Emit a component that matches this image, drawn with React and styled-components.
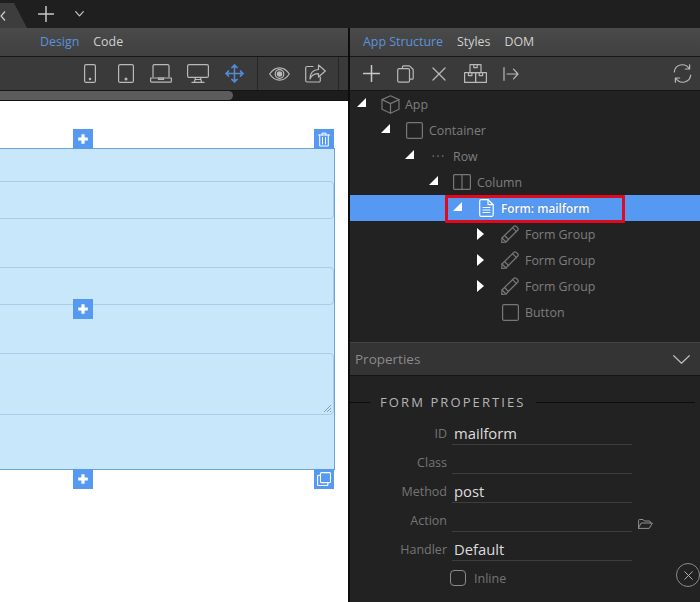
import React from "react";
import styled, { createGlobalStyle } from "styled-components";

const Global = createGlobalStyle`
  html, body { margin: 0; padding: 0; background: #000; }
  * { box-sizing: border-box; }
  body { font-family: "Open Sans", "Noto Sans", "Liberation Sans", sans-serif; }
`;

const Page = styled.div`
  width: 700px; height: 602px; display: flex; flex-direction: column; overflow: hidden; background: #222;
`;
const TopBar = styled.div`
  height: 28px; flex: none; display: flex; background: #1f1f20; color: #cfcfcf;
`;
const Tab = styled.div`
  width: 27px; height: 25px; margin-top: 3px; background: #3d3d3d; display: flex; align-items: center;
  clip-path: polygon(0 0, 14px 0, 27px 25px, 0 25px);
`;
const TopButton = styled.div`
  display: flex; align-items: center; justify-content: center; height: 28px; width: ${p => p.$w}px; margin-left: ${p => p.$ml || 0}px;
`;
const Main = styled.div`
  flex: 1; display: flex; min-height: 0;
`;
const LeftPane = styled.div`
  width: 349px; flex: none; display: flex; flex-direction: column; border-right: 1px solid #0d0d0d; background: #fff;
`;
const RightPane = styled.div`
  flex: 1; min-width: 0; display: flex; flex-direction: column; background: #222; position: relative; border-left: 1px solid #0d0d0d;
`;
const TabBar = styled.div`
  height: 29px; flex: none; display: flex; align-items: center; gap: ${p => p.$gap}px; padding-left: ${p => p.$pl}px;
  padding-bottom: 2px;
  background: linear-gradient(#4a4a4a, #404040); border-bottom: 1px solid #161616; font-size: 12.4px;
`;
const TabLink = styled.span`
  color: ${p => (p.$active ? "#5b93dc" : "#d0d0d0")};
`;
const Toolbar = styled.div`
  height: 34px; flex: none; display: flex; align-items: center; background: #3a3a3a; border-bottom: 1px solid #161616;
  padding-left: ${p => p.$pl || 0}px;
`;
const ToolCell = styled.div`
  width: ${p => p.$w || 36}px; height: 33px; flex: none; display: flex; align-items: center; justify-content: center;
  margin-left: ${p => p.$ml || 0}px;
`;
const ToolSep = styled.div`
  width: 1px; height: 33px; flex: none; background: #262626; margin-left: ${p => p.$ml}px;
`;
const ScrollTrack = styled.div`
  height: 10px; flex: none; background: #1c1c1c; border-bottom: 1px solid #111;
`;
const ScrollThumb = styled.div`
  width: 233px; height: 9px; background: #5c5c5c; border-radius: 0 5px 5px 0;
`;
const Canvas = styled.div`
  flex: 1; background: #fff; padding-top: 47px; overflow: hidden; position: relative;
`;
const SelectBox = styled.div`
  width: 337px; height: 322px; margin-left: -2px; position: relative; background: #c9e7fb;
  border: 1px solid #6ba4d8; padding-top: 32px; display: flex; flex-direction: column;
`;
const FieldShape = styled.div`
  height: ${p => p.$h}px; margin-bottom: ${p => p.$mb || 0}px; margin-right: 0; margin-left: -10px; flex: none;
  border: 1px solid #a8cde8; border-radius: 4px; position: relative;
`;
const Grip = styled.svg`
  position: absolute; right: 1px; bottom: 1px;
`;
const Handle = styled.div`
  position: absolute; width: 20px; height: 20px; background: #5599f3; display: flex; align-items: center; justify-content: center;
  left: ${p => p.$x}px; top: ${p => p.$y}px;
`;
const Tree = styled.div`
  flex: none; height: 251px; padding-top: 0; position: relative;
`;
const TreeRow = styled.div`
  height: 26px; display: flex; align-items: center; position: relative; padding-left: ${p => p.$level * 24 + 7}px;
  background: ${p => (p.$selected ? "#5599f3" : "transparent")};
  color: ${p => (p.$selected ? "#fff" : "#7e7e7e")}; font-size: 12.4px;
  ${p => p.$selected && "text-shadow: 0 0 1px rgba(0,0,0,.35); font-weight: 600; font-size: 11.8px;"}
`;
const Toggle = styled.span`
  width: 21px; height: 26px; flex: none; display: flex; align-items: center;
  padding-bottom: ${p => (p.$corner ? 4 : 0)}px;
`;
const NodeIcon = styled.span`
  width: 24px; margin-right: 3px; flex: none; display: flex; align-items: center; justify-content: center; height: 26px;
`;
const RedOutline = styled.div`
  position: absolute; left: 95px; top: 0; width: 180px; height: 28px; border: 3px solid #df0a1e; border-radius: 1px; pointer-events: none;
`;
const PropHeader = styled.div`
  height: 34px; flex: none; display: flex; align-items: center; justify-content: space-between; padding: 0 10px 0 5px;
  background: #343434; border-top: 1px solid #444; border-bottom: 1px solid #151515; color: #8a8a8a; font-size: 13.5px;
`;
const SectionTitle = styled.div`
  display: flex; align-items: center; margin-top: 16px; color: #b5b5b5; font-size: 13px; letter-spacing: 2.1px; height: 20px; padding-right: 5px;
  &::before { content: ""; width: 20px; height: 1px; background: #0c0c0c; margin-right: 10px; }
  &::after { content: ""; flex: 1; height: 1px; background: #0c0c0c; margin-left: 10px; }
`;
const Fields = styled.div`
  display: flex; flex-direction: column; margin-top: 4px;
`;
const FieldRow = styled.div`
  height: 29px; display: flex; align-items: flex-end; position: relative;
`;
const FieldLabel = styled.span`
  width: 97px; text-align: right; color: #757575; font-size: 12.5px; line-height: 22px;
`;
const FieldValue = styled.div`
  width: 180px; margin-left: 5px; height: 29px; border-bottom: 1px solid #3d3d3d; color: #dcdcdc; font-size: 14.8px; line-height: 28px; padding-left: 2px; padding-top: 3px;
`;
const FolderWrap = styled.span`
  margin-left: 6px; height: 29px; display: flex; align-items: flex-end; padding-bottom: 3px;
`;
const InlineRow = styled.label`
  display: flex; align-items: center; margin-left: 100px; height: 26px; color: #757575; font-size: 12.5px; gap: 8px; margin-top: 4px;
`;
const CheckBox = styled.span`
  width: 16px; height: 16px; border: 1px solid #8a8a8a; border-radius: 4px; display: block;
`;
const CloseCircle = styled.div`
  position: absolute; left: 326px; top: 535px; width: 24px; height: 24px; border-radius: 50%; border: 1px solid #8a8a8a;
  display: flex; align-items: center; justify-content: center;
`;

const S = ({ w, h, vb, c = "#b9b9b9", sw = 1.2, children }) => (
  <svg width={w} height={h} viewBox={vb || `0 0 ${w} ${h}`} fill="none" stroke={c} strokeWidth={sw} strokeLinejoin="round" strokeLinecap="round">
    {children}
  </svg>
);

const Phone = () => <S w={12} h={19}><rect x=".6" y=".6" width="10.8" height="17.8" rx="1.5" /><circle cx="6" cy="15" r=".7" fill="#b9b9b9" /></S>;
const Tablet = () => <S w={16} h={19}><rect x=".6" y=".6" width="14.8" height="17.8" rx="1.5" /><circle cx="8" cy="15" r=".9" fill="#b9b9b9" /></S>;
const Laptop = () => <S w={22} h={19}><path d="M3 13V2a1.4 1.4 0 0 1 1.4-1.4h13.2A1.4 1.4 0 0 1 19 2v11" /><path d="M.6 14h20.8v3.2a1 1 0 0 1-1 1H1.6a1 1 0 0 1-1-1z" /><path d="M8.5 14h5v1.5h-5z" /></S>;
const Monitor = () => <S w={22} h={19}><rect x=".6" y=".6" width="20.8" height="12.8" rx="1.5" /><path d="M8.5 13.5 7.5 18M13.5 13.5l1 4.5M5 18.4h12M8 15.5h6" /></S>;
const Move = () => (
  <S w={19} h={19} c="#4f8bd6" sw={1.5}>
    <path d="M9.5 1v17M1 9.5h17" />
    <path d="M6.8 3.6 9.5 1l2.7 2.6M6.8 15.4 9.5 18l2.7-2.6M3.6 6.8 1 9.5l2.6 2.7M15.4 6.8 18 9.5l-2.6 2.7" fill="#4f8bd6" />
  </S>
);
const Eye = () => <S w={21} h={14}><path d="M.7 7C3.5 2.8 6.8.8 10.5.8S17.5 2.8 20.3 7c-2.8 4.2-6.1 6.2-9.8 6.2S3.5 11.2.7 7z" /><circle cx="10.5" cy="7" r="4.3" /><circle cx="10.5" cy="7" r="2.2" fill="#b9b9b9" /></S>;
const Share = () => <S w={21} h={19}><path d="M8 2.5H2.2A1.5 1.5 0 0 0 .7 4v12.5A1.5 1.5 0 0 0 2.2 18h11.6a1.5 1.5 0 0 0 1.5-1.5V13" /><path d="M13.5 1 20.3 7l-6.8 6V9.7C9.5 9.7 6.5 11 5 15c0-5.5 3-9.2 8.5-9.5z" /></S>;
const Plus = ({ s = 17, c = "#c8c8c8" }) => <S w={s} h={s} c={c} sw={1.5}><path d={`M${s / 2} .5V${s - .5}M.5 ${s / 2}H${s - .5}`} /></S>;
const Copy = () => <S w={17} h={18}><path d="M5.5 3.5V1.8A1 1 0 0 1 6.5.8h6l3.7 3.7v8.7a1 1 0 0 1-1 1H12.6" /><rect x=".7" y="3.6" width="11.8" height="13.6" rx="1.5" /></S>;
const Cross = () => <S w={14} h={14} sw={1.3}><path d="M1 1l12 12M13 1 1 13" /></S>;
const Boxes = () => <S w={23} h={19}><rect x="6" y=".6" width="11" height="8" /><path d="M9.8.6v3h3.4v-3" /><rect x=".6" y="8.6" width="11" height="9.8" /><rect x="11.6" y="8.6" width="10.8" height="9.8" /><path d="M4.5 8.6v3h3.4v-3M15.2 8.6v3h3.4v-3" /></S>;
const ArrowBar = () => <S w={16} h={14}><path d="M1 .7v12.6M4 7h11M10.5 2.2 15 7l-4.5 4.8" /></S>;
const Refresh = () => <S w={19} h={19}><path d="M1.3 8A8 8 0 0 1 16 4.5M17.7 11A8 8 0 0 1 3 14.5" /><path d="M16.6.8V5h-4.2M2.4 18.2V14h4.2" /></S>;

const Corner = () => <svg width="9" height="9" viewBox="0 0 9 9"><path d="M9 0v9H0z" fill="#fff" /></svg>;
const RightArrow = () => <svg width="7" height="12" viewBox="0 0 7 12"><path d="M0 0l7 6-7 6z" fill="#fff" /></svg>;

const G = "#777";
const Cube = () => <S w={19} h={19} c={G}><path d="M9.5.8 18 4.6v9.6l-8.5 4L1 14.2V4.6z" /><path d="M1 4.6l8.5 4 8.5-4M9.5 8.6v9.6" /></S>;
const Square = () => <S w={17} h={17} c={G}><rect x=".6" y=".6" width="15.8" height="15.8" rx="1.5" /></S>;
const Dots = () => <S w={12} h={4} c="#9a9a9a"><path d="M1 2h.6M5.7 2h.6M10.4 2h.6" /></S>;
const Columns = () => <S w={18} h={16} c={G}><rect x=".6" y=".6" width="16.8" height="14.8" rx="1" /><path d="M9 .6v14.8" /></S>;
const Doc = () => <S w={15} h={18} c="#fff"><path d="M2 .7h7l5.2 5v10a1.6 1.6 0 0 1-1.6 1.6H2A1.4 1.4 0 0 1 .7 15.8V2A1.4 1.4 0 0 1 2 .7z" /><path d="M9 .7v5h5.2M4 8.5h7M4 11h7M4 13.5h7" /></S>;
const Pencil = () => <S w={18} h={18} c={G}><path d="M1 13 13 1.2a1.5 1.5 0 0 1 2 0l1.8 1.8a1.5 1.5 0 0 1 0 2L5 17l-4.3.6z" /><path d="M1 13l4 4M3.5 10.5l4 4M11.5 2.6l4 4" /></S>;
const Chevron = () => <S w={17} h={9} c="#bdbdbd"><path d="M.7.7 8.5 8.3 16.3.7" /></S>;
const Folder = () => <S w={15} h={10} c="#8f8f8f" sw={1}><path d="M.6 9.4V1.5a1 1 0 0 1 1-1h3.5l1.2 1.5h5a1 1 0 0 1 1 1v1" /><path d="M.6 9.4h10.6l3.2-5.4H3.6z" /></S>;

const HandlePlus = () => <svg width="12" height="12" viewBox="0 0 12 12"><path d="M6 1.2v9.6M1.2 6h9.6" stroke="#fff" strokeWidth="3.2" /></svg>;
const HandleTrash = () => <S w={12} h={15} c="#fff" sw={1}><path d="M.5 3h11M4 3V1.2h4V3M1.7 3v11h8.6V3M4.5 5.5v6.5M7.5 5.5v6.5" /></S>;
const HandleCopy = () => <S w={14} h={14} c="#fff" sw={1.1}><rect x="3.5" y=".6" width="10" height="10" rx="1" /><path d="M3.4 3.2H1.6a1 1 0 0 0-1 1v8.3a1 1 0 0 0 1 1h8.3a1 1 0 0 0 1-1v-1.8" /></S>;

const nodes = [
  { level: 0, t: "corner", I: Cube, label: "App" },
  { level: 1, t: "corner", I: Square, label: "Container" },
  { level: 2, t: "corner", I: Dots, label: "Row" },
  { level: 3, t: "corner", I: Columns, label: "Column" },
  { level: 4, t: "corner", I: Doc, label: "Form: mailform", selected: true },
  { level: 5, t: "arrow", I: Pencil, label: "Form Group" },
  { level: 5, t: "arrow", I: Pencil, label: "Form Group" },
  { level: 5, t: "arrow", I: Pencil, label: "Form Group" },
  { level: 5, t: "", I: Square, label: "Button" },
];

const fields = [
  { label: "ID", value: "mailform" },
  { label: "Class", value: "" },
  { label: "Method", value: "post" },
  { label: "Action", value: "", folder: true },
  { label: "Handler", value: "Default" },
];

export default function App() {
  return (
    <Page>
      <Global />
      <TopBar>
        <Tab>
          <svg width="6" height="10" viewBox="0 0 6 10"><path d="M5 .5 1 5l4 4.5" stroke="#cfcfcf" strokeWidth="1.2" fill="none" /></svg>
        </Tab>
        <TopButton $w={20} $ml={9}><Plus s={16} /></TopButton>
        <TopButton $w={12} $ml={17}>
          <S w={9} h={6} c="#c8c8c8"><path d="M.7.7 4.5 4.8 8.3.7" /></S>
        </TopButton>
      </TopBar>
      <Main>
        <LeftPane>
          <TabBar $gap={14} $pl={40}>
            <TabLink $active>Design</TabLink>
            <TabLink>Code</TabLink>
          </TabBar>
          <Toolbar $pl={72}>
            <ToolCell><Phone /></ToolCell>
            <ToolCell $w={35}><Tablet /></ToolCell>
            <ToolCell><Laptop /></ToolCell>
            <ToolCell $w={37}><Monitor /></ToolCell>
            <ToolCell><Move /></ToolCell>
            <ToolSep $ml={5} />
            <ToolCell $ml={3}><Eye /></ToolCell>
            <ToolCell><Share /></ToolCell>
            <ToolSep $ml={5} />
          </Toolbar>
          <ScrollTrack><ScrollThumb /></ScrollTrack>
          <Canvas>
            <SelectBox>
              <FieldShape $h={38} $mb={48} />
              <FieldShape $h={38} $mb={48} />
              <FieldShape $h={62}>
                <Grip width="9" height="9" viewBox="0 0 9 9">
                  <path d="M1 8 8 1M4 8 8 4M7 8l1-1" stroke="#6f8ea6" strokeWidth=".8" />
                </Grip>
              </FieldShape>
              <Handle $x={74} $y={-20}><HandlePlus /></Handle>
              <Handle $x={315} $y={-20}><HandleTrash /></Handle>
              <Handle $x={74} $y={150}><HandlePlus /></Handle>
              <Handle $x={74} $y={320}><HandlePlus /></Handle>
              <Handle $x={315} $y={320}><HandleCopy /></Handle>
            </SelectBox>
          </Canvas>
        </LeftPane>
        <RightPane>
          <TabBar $gap={14} $pl={13}>
            <TabLink $active>App Structure</TabLink>
            <TabLink>Styles</TabLink>
            <TabLink>DOM</TabLink>
          </TabBar>
          <Toolbar $pl={4}>
            <ToolCell $w={34}><Plus /></ToolCell>
            <ToolCell $w={34}><Copy /></ToolCell>
            <ToolCell $w={34}><Cross /></ToolCell>
            <ToolCell $w={38}><Boxes /></ToolCell>
            <ToolCell $w={34}><ArrowBar /></ToolCell>
            <ToolCell $w={34} $ml={137}><Refresh /></ToolCell>
          </Toolbar>
          <Tree>
            {nodes.map((n, i) => (
              <TreeRow key={i} $level={n.level} $selected={n.selected}>
                <Toggle $corner={n.t === "corner"}>{n.t === "corner" ? <Corner /> : n.t === "arrow" ? <RightArrow /> : null}</Toggle>
                <NodeIcon><n.I /></NodeIcon>
                {n.label}
                {n.selected && <RedOutline />}
              </TreeRow>
            ))}
          </Tree>
          <PropHeader>Properties<Chevron /></PropHeader>
          <SectionTitle>FORM PROPERTIES</SectionTitle>
          <Fields>
            {fields.map(f => (
              <FieldRow key={f.label}>
                <FieldLabel>{f.label}</FieldLabel>
                <FieldValue>{f.value}</FieldValue>
                {f.folder && <FolderWrap><Folder /></FolderWrap>}
              </FieldRow>
            ))}
          </Fields>
          <InlineRow><CheckBox />Inline</InlineRow>
          <CloseCircle>
            <S w={9} h={9} c="#b0b0b0" sw={1}><path d="M.7.7l7.6 7.6M8.3.7.7 8.3" /></S>
          </CloseCircle>
        </RightPane>
      </Main>
    </Page>
  );
}
